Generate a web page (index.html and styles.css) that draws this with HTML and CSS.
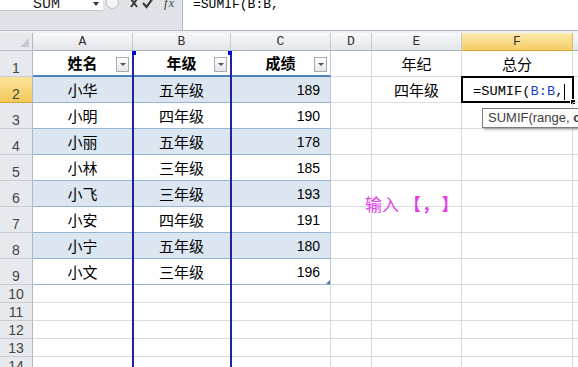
FILE: index.html
```html
<!DOCTYPE html>
<html>
<head lang="zh">
    <meta charset="UTF-8">
    <title>SUMIF</title>
    <link rel="stylesheet" href="styles.css">
</head>
<body>
<div class="fbar">
    <div class="name-area">
        <div class="namebox"><span class="name">SUM</span><span class="drop"></span></div>
    </div>
    <div class="tools">
        <span class="grip"></span>
        <svg class="ico-x" width="8" height="12" viewBox="0 0 8 12"><path d="M1 2 L7 10 M7 2 L1 10" stroke="#3a3a3a" stroke-width="2"/></svg>
        <svg class="ico-ok" width="12" height="12" viewBox="0 0 12 12"><path d="M1 6 L4.5 10 L11 1" fill="none" stroke="#3a3a3a" stroke-width="2.2"/></svg>
        <span class="fx"><i>f</i><i>x</i></span>
    </div>
    <div class="finput"><div class="ftext">=SUMIF(B:B,</div></div>
</div>
<div class="fsep"></div>

<div class="sheet">
    <div class="corner"><span class="tri"></span></div>
    <div class="ch">A</div>
    <div class="ch">B</div>
    <div class="ch">C</div>
    <div class="ch">D</div>
    <div class="ch">E</div>
    <div class="ch sel">F</div>
    <div class="ch"></div>

    <div class="rh">1</div>
    <div class="c t hd ctr">姓名<span class="flt"></span></div>
    <div class="c t hd ctr">年级<span class="flt"></span></div>
    <div class="c t hd ctr lastc">成绩<span class="flt"></span></div>
    <div class="c"></div>
    <div class="c ctr">年纪</div>
    <div class="c ctr">总分</div>
    <div class="c"></div>

    <div class="rh sel">2</div>
    <div class="c t band ctr">小华</div>
    <div class="c t band ctr">五年级</div>
    <div class="c t band num lastc">189</div>
    <div class="c"></div>
    <div class="c ctr">四年级</div>
    <div class="c act">=SUMIF(<span class="ref">B:B</span>,<span class="caret"></span><span class="handle"></span></div>
    <div class="c"></div>

    <div class="rh">3</div>
    <div class="c t ctr">小明</div>
    <div class="c t ctr">四年级</div>
    <div class="c t num lastc">190</div>
    <div class="c"></div><div class="c"></div><div class="c"></div><div class="c"></div>

    <div class="rh">4</div>
    <div class="c t band ctr">小丽</div>
    <div class="c t band ctr">五年级</div>
    <div class="c t band num lastc">178</div>
    <div class="c"></div><div class="c"></div><div class="c"></div><div class="c"></div>

    <div class="rh">5</div>
    <div class="c t ctr">小林</div>
    <div class="c t ctr">三年级</div>
    <div class="c t num lastc">185</div>
    <div class="c"></div><div class="c"></div><div class="c"></div><div class="c"></div>

    <div class="rh">6</div>
    <div class="c t band ctr">小飞</div>
    <div class="c t band ctr">三年级</div>
    <div class="c t band num lastc">193</div>
    <div class="c"></div><div class="c"></div><div class="c"></div><div class="c"></div>

    <div class="rh">7</div>
    <div class="c t ctr">小安</div>
    <div class="c t ctr">四年级</div>
    <div class="c t num lastc">191</div>
    <div class="c"></div><div class="c"></div><div class="c"></div><div class="c"></div>

    <div class="rh">8</div>
    <div class="c t band ctr">小宁</div>
    <div class="c t band ctr">五年级</div>
    <div class="c t band num lastc">180</div>
    <div class="c"></div><div class="c"></div><div class="c"></div><div class="c"></div>

    <div class="rh">9</div>
    <div class="c t ctr">小文</div>
    <div class="c t ctr">三年级</div>
    <div class="c t num lastc">196<span class="resize"></span></div>
    <div class="c"></div><div class="c"></div><div class="c"></div><div class="c"></div>

    <div class="rh sm">10</div>
    <div class="c"></div><div class="c"></div><div class="c"></div><div class="c"></div><div class="c"></div><div class="c"></div><div class="c"></div>
    <div class="rh sm">11</div>
    <div class="c"></div><div class="c"></div><div class="c"></div><div class="c"></div><div class="c"></div><div class="c"></div><div class="c"></div>
    <div class="rh sm">12</div>
    <div class="c"></div><div class="c"></div><div class="c"></div><div class="c"></div><div class="c"></div><div class="c"></div><div class="c"></div>
    <div class="rh sm">13</div>
    <div class="c"></div><div class="c"></div><div class="c"></div><div class="c"></div><div class="c"></div><div class="c"></div><div class="c"></div>
    <div class="rh sm">14</div>
    <div class="c"></div><div class="c"></div><div class="c"></div><div class="c"></div><div class="c"></div><div class="c"></div><div class="c"></div>

    <!-- lines and notes drawn over the grid -->
    <div class="pb pb1"><span></span></div>
    <div class="pb pb2"><span></span></div>
    <div class="note">输入<b class="l">【，</b><b class="r">】</b></div>
    <div class="tip">SUMIF(range, <b>c</b>riteria, [sum_range])</div>
</div>
</body>
</html>
```

FILE: styles.css
```css
*{
    margin:0;
    padding:0;
    box-sizing:border-box;
}
body{
    width:578px;
    height:367px;
    overflow:hidden;
    background:#fff;
    font-family:"Noto Sans CJK SC","Noto Sans",sans-serif;
    color:#000;
}

/* formula bar */
.fbar{
    display:flex;
    height:31px;
    border-bottom:1px solid #b4bbc5;
    overflow:hidden;
}
.name-area{
    width:103px;
    background:#dfe3e8;
}
.namebox{
    height:11px;
    background:#fff;
    border-bottom:1px solid #c3c8cf;
    display:flex;
    overflow:hidden;
}
.name{
    font:15px/15px "Liberation Mono",monospace;
    margin:-3px 0 0 33px;
    color:#222;
}
.drop{
    margin:2px 4px 0 auto;
    width:0;
    height:0;
    border-left:3px solid transparent;
    border-right:3px solid transparent;
    border-top:4px solid #333;
}
.tools{
    width:79px;
    background:#dfe3e8;
    display:flex;
    align-items:flex-start;
}
.grip{
    width:13px;
    height:13px;
    margin:-4px 0 0 3px;
    border-radius:50%;
    background:#f4f5f7;
    border:1px solid #b5bcc5;
}
.ico-x{
    margin:-3px 0 0 11px;
}
.ico-ok{
    margin:-3px 0 0 4px;
}
.fx{
    margin:-4px 0 0 10px;
    font:italic 12px/14px "Liberation Serif",serif;
    color:#444;
}
.fx i:first-child{
    font-size:13px;
    margin-right:1px;
}
.finput{
    flex:1;
    background:#fff;
    border-left:1px solid #aeb6c1;
    overflow:hidden;
}
.ftext{
    font:13px/13px "Liberation Mono",monospace;
    margin:-2px 0 0 10px;
}
.fsep{
    height:2px;
    background:#eef0f3;
}

/* sheet grid */
.sheet{
    position:relative;
    display:grid;
    grid-template-columns:33px 100px 98px 100px 41px 90px 111px 1fr;
    grid-template-rows:18px repeat(9,26px) repeat(5,18px);
}
.corner{
    position:relative;
    background:#e6e9ee;
    border-right:1px solid #b0b8c3;
    border-bottom:1px solid #b0b8c3;
}
.corner .tri{
    position:absolute;
    right:3px;
    bottom:3px;
    width:0;
    height:0;
    border-left:9px solid transparent;
    border-bottom:9px solid #c3c9d1;
}
.ch{
    display:flex;
    justify-content:center;
    align-items:center;
    background:linear-gradient(#f7f8fa,#e3e6ea);
    border-right:1px solid #c5cad1;
    border-bottom:1px solid #aab3bf;
    font:13px/13px "Liberation Mono",monospace;
    color:#333;
}
.ch.sel{
    background:linear-gradient(#fcebb0,#f5cd63);
    border-bottom-color:#d9a43a;
    border-right-color:#e0b860;
}
.rh{
    display:flex;
    justify-content:center;
    align-items:flex-end;
    background:#e6e9ee;
    border-right:1px solid #b0b8c3;
    border-bottom:1px solid #c9ced5;
    font:14px/15px "Liberation Sans",sans-serif;
    color:#444;
}
.rh.sel{
    background:linear-gradient(#fbe39a,#f4c95c);
    border-bottom-color:#d9a43a;
}
.c{
    position:relative;
    display:flex;
    align-items:center;
    padding:0 3px;
    border-right:1px solid #dadcdf;
    border-bottom:1px solid #dadcdf;
    font-size:15px;
    line-height:18px;
    white-space:nowrap;
}
.ctr{
    justify-content:center;
}
.num{
    justify-content:flex-end;
    padding-right:10px;
    font-family:"Liberation Sans",sans-serif;
    font-size:14px;
}

/* table A1:C9 */
.t{
    border-bottom-color:#95b3d7;
}
.band{
    background:#dce6f1;
    border-right-color:#dce6f1;
}
.t.lastc{
    border-right-color:#b9c9dc;
}
.hd{
    font-weight:bold;
    border-bottom:2px solid #4f81bd;
}
.flt{
    position:absolute;
    right:3px;
    top:6px;
    width:13px;
    height:15px;
    border:1px solid #a9adb3;
    background:linear-gradient(#ffffff,#e4e6e9);
}
.flt::after{
    content:"";
    position:absolute;
    left:3px;
    top:5px;
    border-left:3px solid transparent;
    border-right:3px solid transparent;
    border-top:3px solid #555;
}
.resize{
    position:absolute;
    right:0;
    bottom:0;
    border-left:4px solid transparent;
    border-bottom:4px solid #4f6ea8;
}

/* active cell */
.act{
    margin:-1px -1px 0 -1px;
    border:2px solid #000;
    padding-left:10px;
    padding-top:4px;
    font:13.7px/16px "Liberation Mono",monospace;
}
.ref{
    color:#1f3fd0;
}
.caret{
    display:inline-block;
    width:1px;
    height:16px;
    margin-left:1px;
    background:#000;
}
.handle{
    position:absolute;
    right:-4px;
    bottom:-4px;
    width:6px;
    height:6px;
    background:#000;
    border:1px solid #fff;
}

/* overlays */
.pb{
    position:absolute;
    top:18px;
    bottom:-20px;
    width:2px;
    background:#22229a;
}
.pb span{
    position:absolute;
    top:0;
    width:4px;
    height:4px;
    background:#0000d0;
}
.pb1{
    left:132px;
}
.pb1 span{
    left:0;
}
.pb2{
    left:230px;
}
.pb2 span{
    right:0;
}
.note{
    position:absolute;
    left:365px;
    top:160px;
    font-size:17px;
    line-height:22px;
    color:#e23fe6;
}
.note .l{
    margin-left:5px;
    letter-spacing:1px;
}
.note .r{
    margin-left:10px;
}
.tip{
    position:absolute;
    left:482px;
    top:75px;
    width:200px;
    height:20px;
    padding:0 5px;
    background:#fcfcfc;
    border:1px solid #7c7c7c;
    box-shadow:2px 2px 2px rgba(0,0,0,.25);
    font:13px/18px "Liberation Sans",sans-serif;
    color:#3f3f3f;
    white-space:nowrap;
}
```
